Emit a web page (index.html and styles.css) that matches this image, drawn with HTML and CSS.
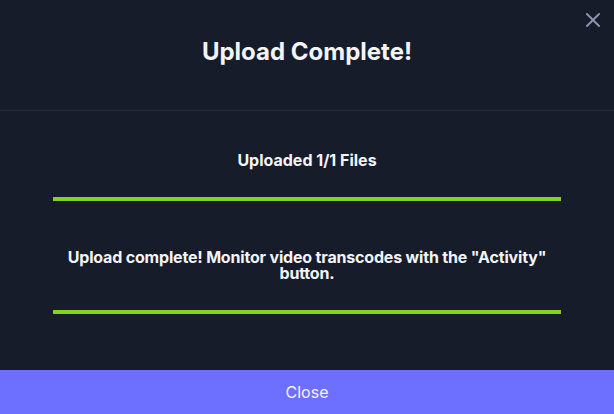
FILE: index.html
```html
<!DOCTYPE html>
<html>
<head>
<meta charset="utf-8">
<link rel="stylesheet" href="styles.css">
</head>
<body>
<div class="modal">
  <header class="head">
    <h1 class="title">Upload Complete!</h1>
    <button class="x" aria-label="Close">
      <svg width="14" height="14" viewBox="0 0 14 14"><path d="M1 1L13 13M13 1L1 13" stroke="#8d98b3" stroke-width="1.8" stroke-linecap="round"/></svg>
    </button>
  </header>
  <main class="body">
    <div class="status">Uploaded 1/1 Files</div>
    <div class="bar"><div class="fill" style="width:100%"></div></div>
    <div class="msg">Upload complete! Monitor video transcodes with the "Activity" button.</div>
    <div class="bar"><div class="fill" style="width:100%"></div></div>
  </main>
  <button class="close">Close</button>
</div>
</body>
</html>
```
FILE: styles.css
```css
html, body {
  margin: 0;
  padding: 0;
  background: #171c2a;
  font-family: Inter, "Noto Sans", sans-serif;
  color: #f3f4f8;
}
.modal {
  width: 614px;
  height: 414px;
  display: flex;
  flex-direction: column;
}
.head {
  position: relative;
  height: 110px;
  border-bottom: 1px solid #222838;
  display: flex;
  justify-content: center;
  align-items: flex-start;
}
.title {
  margin: 36px 0 0;
  font-size: 24px;
  font-weight: 700;
  line-height: 32px;
}
.x {
  position: absolute;
  right: 14px;
  top: 13px;
  width: 14px;
  height: 14px;
  padding: 0;
  border: 0;
  background: none;
  display: flex;
}
.body {
  flex: 1;
  padding: 0 53px;
  display: flex;
  flex-direction: column;
  align-items: stretch;
}
.status {
  margin-top: 39px;
  text-align: center;
  font-size: 16px;
  font-weight: 700;
  line-height: 20px;
}
.bar {
  height: 4px;
  margin-top: 27px;
  background: #2a3040;
}
.fill {
  height: 100%;
  background: #84d11f;
}
.msg {
  margin-top: 48px;
  text-align: center;
  font-size: 16px;
  font-weight: 700;
  line-height: 16px;
  letter-spacing: -0.18px;
}
.msg + .bar {
  margin-top: 29px;
}
.close {
  height: 44px;
  border: 0;
  background: #6c6fff;
  color: #f5f5ff;
  font-family: Inter, "Noto Sans", sans-serif;
  font-size: 16px;
  font-weight: 400;
  padding: 0;
}
```
